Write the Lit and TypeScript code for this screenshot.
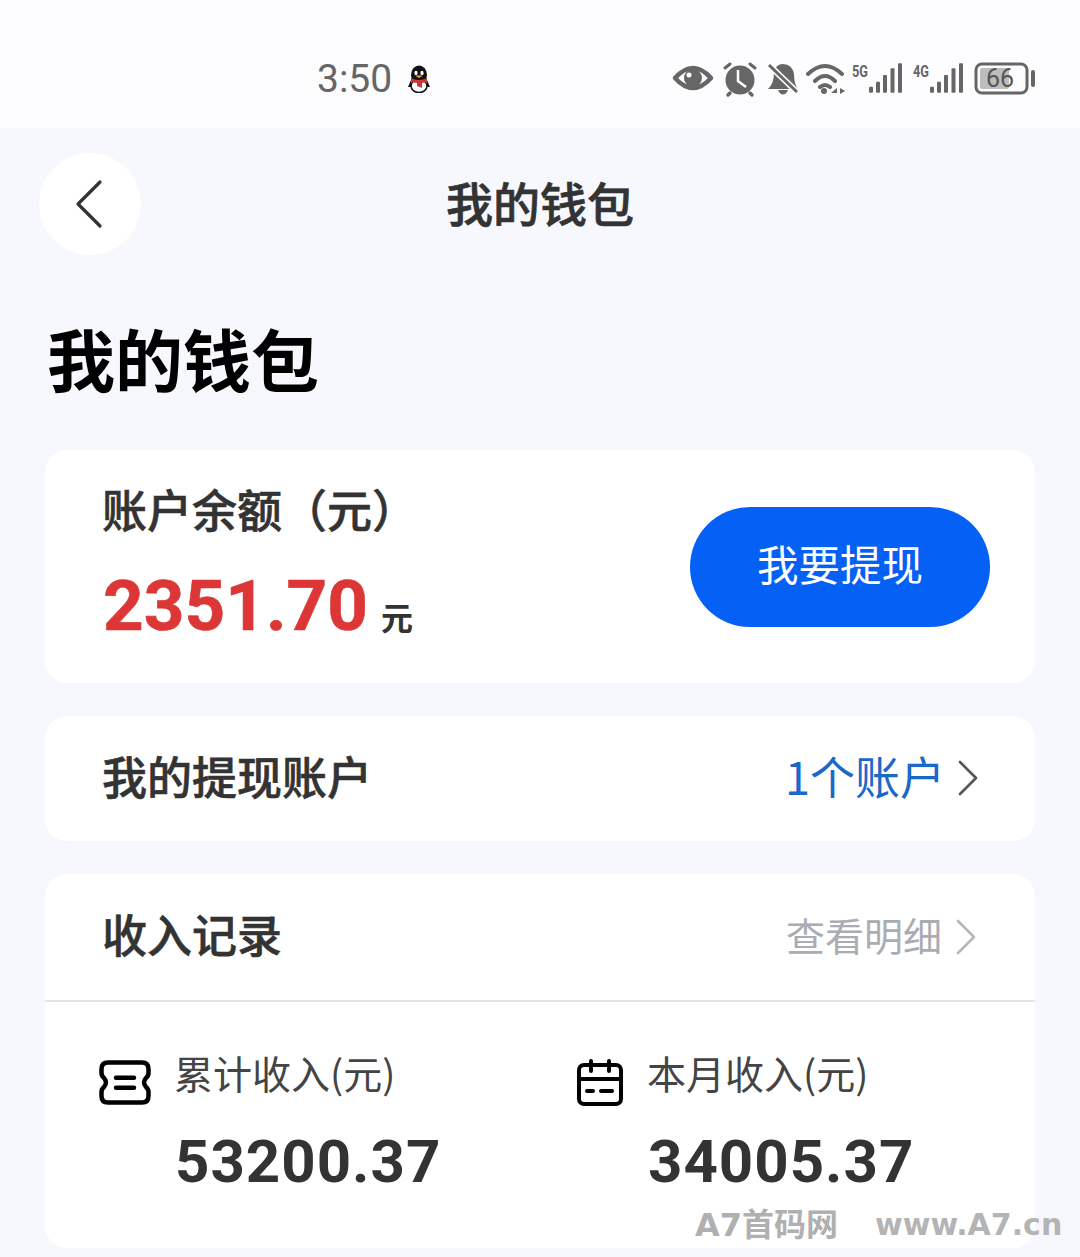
import { LitElement, html, css, svg } from "lit";
import { customElement } from "lit/decorators.js";

const chevron = (color: string) => html`<svg class="chev" width="22" height="38" viewBox="0 0 22 38" fill="none" stroke=${color} stroke-width="2.6" stroke-linecap="round" stroke-linejoin="round"><path d="M3 3 L19 19 L3 35"/></svg>`;

const bars = (x: number) => svg`<g transform="translate(${x} 0)">
  <rect x="0" y="28.7" width="4" height="6" rx="1"/>
  <rect x="7" y="23.7" width="4" height="11" rx="1"/>
  <rect x="14" y="17" width="4" height="17.7" rx="1"/>
  <rect x="21.5" y="10.3" width="4" height="24.4" rx="1"/>
  <rect x="29" y="5.3" width="4" height="29.4" rx="1"/>
</g>`;

@customElement("app-root")
export class AppRoot extends LitElement {
  static styles = css`
    :host { display: block; width: 1080px; height: 1257px; overflow: hidden; position: relative; background: #f6f8fe; font-family: "Noto Sans CJK SC", Roboto, sans-serif; color: #333; }
    .status { height: 128px; background: #fdfcfe; display: flex; align-items: flex-start; box-sizing: border-box; padding: 55px 0 0 317px; }
    .time { font: 400 39px/48px Roboto, sans-serif; color: #666; width: 90px; }
    .qq { margin-top: 10px; }
    .sicons { margin: 3px 0 0 239px; }
    .nav { display: grid; grid-template-columns: 1fr auto 1fr; align-items: center; padding: 25px 39px 0; }
    .back { width: 102px; height: 102px; border-radius: 50%; background: #fff; display: flex; align-items: center; justify-content: center; }
    .nav h2 { margin: 0 0 4px; font-size: 47px; line-height: 64px; font-weight: 500; -webkit-text-stroke: 0.7px #333; color: #333; }
    h1 { margin: 55px 0 0 47px; font-size: 68px; line-height: 96px; height: 96px; font-weight: 700; color: #000; }
    .cards { padding: 0 45px; margin-top: 44px; display: flex; flex-direction: column; gap: 33px; }
    .card { background: #fff; border-radius: 22px; box-sizing: border-box; }
    .balance { height: 233px; display: flex; justify-content: space-between; align-items: center; padding: 0 45px 0 58px; }
    .bl { display: flex; flex-direction: column; align-self: stretch; padding-top: 28px; }
    .bl .label { font-size: 45px; line-height: 62px; font-weight: 500; -webkit-text-stroke: 0.6px #333; color: #333; margin-left: -1px; }
    .amount { display: flex; align-items: baseline; margin-top: 30px; line-height: 72px; }
    .amount b { font: 700 71px/72px Roboto, sans-serif; color: #dd3636; -webkit-text-stroke: 0.6px #dd3636; }
    .amount span { font-size: 32px; font-weight: 700; color: #333; margin-left: 13px; }
    .btn { width: 300px; height: 120px; border-radius: 60px; background: #0561f5; color: #fff; font-size: 41.5px; display: flex; align-items: center; justify-content: center; padding-bottom: 8px; box-sizing: border-box; margin-top: 1px; }
    .row { height: 125px; display: flex; align-items: center; justify-content: space-between; padding: 0 56px 6px 57px; box-sizing: border-box; }
    .row .t { font-size: 45px; font-weight: 500; -webkit-text-stroke: 0.6px #333; color: #333; line-height: 62px; }
    .right { display: flex; align-items: center; gap: 13px; line-height: 60px; }
    .chev { margin-top: 5px; }
    .blue { color: #1a68c8; font-size: 45px; gap: 12px; }
    .blue span { margin-left: 1px; }
    .grey { color: #a9adb3; font-size: 39px; gap: 13px; margin-right: 2px; }
    .income { height: 374px; }
    .income .row { height: 126px; }
    .divider { height: 2px; background: #e2e4e8; }
    .stats { display: grid; grid-template-columns: 473px 1fr; padding: 43px 0 0 54px; }
    .stat { display: grid; grid-template-columns: 76px 1fr; align-items: start; }
    .ticket { margin-top: 15px; }
    .cal { margin: 14px 0 0 5px; }
    .stat .n { font-size: 39px; line-height: 54px; color: #444; margin-left: -1px; }
    .stat .v { grid-column: 2; font: 700 60px/70px Roboto, sans-serif; color: #333; letter-spacing: 1px; margin-top: 21px; }
    .wm { position: absolute; left: 695px; top: 1205px; display: flex; gap: 37px; line-height: 40px; color: #b0b0b0; white-space: pre; }
    .wm1 { font: 700 32px/40px "DejaVu Sans", "Noto Sans CJK SC", sans-serif; width: 143px; }
    .wm2 { font: 700 30px/40px "DejaVu Sans", sans-serif; color: #b4b4b4; }
  `;
  render() {
    return html`
      <div class="status">
        <span class="time">3:50</span>
        <svg class="qq" width="24" height="28" viewBox="0 0 24 28">
          <ellipse cx="12" cy="10" rx="8" ry="9.5" fill="#111"/>
          <ellipse cx="12" cy="21" rx="8" ry="6.5" fill="#fff" stroke="#111" stroke-width="1.5"/>
          <path d="M4 13 Q12 17 20 13 L20 17 L15 18 L15 23 L10 21 L10 18 L4 17Z" fill="#c8383a"/>
          <path d="M4 15 L1 22 L4 22Z M20 15 L23 22 L20 22Z" fill="#111"/>
          <ellipse cx="9" cy="8" rx="1.6" ry="2.2" fill="#fff"/><ellipse cx="15" cy="8" rx="1.6" ry="2.2" fill="#fff"/>
          <path d="M8.5 11 Q12 9.5 15.5 11 L12 13Z" fill="#e8a020"/>
        </svg>
        <svg class="sicons" width="370" height="40" viewBox="0 0 370 40" fill="#666">
          <path d="M5 20 Q23 0 41 20 Q23 40 5 20Z" fill="none" stroke="#666" stroke-width="4.5" stroke-linejoin="round"/>
          <circle cx="23" cy="20" r="9"/><circle cx="19" cy="17" r="2.5" fill="#fdfcfe"/>
          <circle cx="70" cy="22" r="14.5"/><path d="M68 12 V23 L76 29" stroke="#fdfcfe" stroke-width="2.5" fill="none"/>
          <path d="M55 10 L60 6 M85 10 L80 6" stroke="#666" stroke-width="3" stroke-linecap="round"/>
          <path d="M60 35 L58 37 M80 35 L82 37" stroke="#666" stroke-width="3.5" stroke-linecap="round"/>
          <path d="M98 31 Q104 26 104 14 Q106 6 113 6 Q122 6 124 16 Q124 26 128 31Z"/>
          <path d="M108 32 H118 Q116 36.5 113 36.5 Q110 36.5 108 32Z"/>
          <path d="M99 7 L127 34" stroke="#fdfcfe" stroke-width="6"/><path d="M99 7 L127 34" stroke="#666" stroke-width="3"/>
          <path d="M138 16 Q155 0 172 16 M145 23 Q155 13 165 23 M150 29 Q155 25 160 29" stroke="#666" stroke-width="4" fill="none" stroke-linecap="round"/>
          <circle cx="154" cy="33" r="3"/><path d="M161 35 L167 30 V35Z M170 30 L175 33 L170 36Z"/>
          <text x="182" y="19" font-family="Roboto" font-weight="700" font-size="17" textLength="16" lengthAdjust="spacingAndGlyphs" fill="#666">5G</text>
          ${bars(199)}
          <text x="243" y="19" font-family="Roboto" font-weight="700" font-size="17" textLength="16" lengthAdjust="spacingAndGlyphs" fill="#666">4G</text>
          ${bars(260)}
          <rect x="306" y="6" width="51" height="29" rx="6" fill="none" stroke="#666" stroke-width="3"/>
          <rect x="310" y="10" width="29" height="21" rx="2" fill="#bdbdbd"/>
          <text x="330" y="29" text-anchor="middle" font-family="Roboto" font-size="25" fill="#555">66</text>
          <rect x="361" y="12" width="4" height="17" rx="2"/>
        </svg>
      </div>
      <div class="nav">
        <div class="back"><svg width="30" height="50" viewBox="0 0 30 50" fill="none" stroke="#333" stroke-width="3.2" stroke-linecap="round" stroke-linejoin="round"><path d="M25 3 L3 25 L25 47" /></svg></div>
        <h2>我的钱包</h2>
      </div>
      <h1>我的钱包</h1>
      <div class="cards">
        <div class="card balance">
          <div class="bl">
            <div class="label">账户余额（元）</div>
            <div class="amount"><b>2351.70</b><span>元</span></div>
          </div>
          <div class="btn">我要提现</div>
        </div>
        <div class="card row">
          <div class="t">我的提现账户</div>
          <div class="right blue"><span>1个账户</span>${chevron("#555")}</div>
        </div>
        <div class="card income">
          <div class="row">
            <div class="t">收入记录</div>
            <div class="right grey">查看明细${chevron("#b5b8bd")}</div>
          </div>
          <div class="divider"></div>
          <div class="stats">
            <div class="stat">
              <svg class="ticket" width="52" height="45" viewBox="0 0 52 45" fill="none" stroke="#000" stroke-width="4.5" stroke-linecap="round" stroke-linejoin="round">
                <path d="M9 2.5 H43 Q49.5 2.5 49.5 9 V13 Q49.5 16 47 18 Q43 22.5 47 27 Q49.5 29 49.5 32 V36 Q49.5 42.5 43 42.5 H9 Q2.5 42.5 2.5 36 V32 Q2.5 29 5 27 Q9 22.5 5 18 Q2.5 16 2.5 13 V9 Q2.5 2.5 9 2.5Z"/>
                <path d="M17 17.7 H35 M17 27.7 H35"/>
              </svg>
              <div class="n">累计收入(元)</div>
              <div class="v">53200.37</div>
            </div>
            <div class="stat">
              <svg class="cal" width="46" height="47" viewBox="0 0 46 47" fill="none" stroke="#000" stroke-width="4" stroke-linecap="round" stroke-linejoin="round">
                <rect x="2" y="6" width="42" height="39" rx="5"/>
                <path d="M2 20 H44 M14 2 V12 M32 2 V12"/>
                <path d="M10 32 H16 M24 32 H35"/>
              </svg>
              <div class="n">本月收入(元)</div>
              <div class="v">34005.37</div>
            </div>
          </div>
        </div>
      </div>
      <div class="wm"><span class="wm1">A7首码网</span><span class="wm2">www.A7.cn</span></div>
    `;
  }
}
